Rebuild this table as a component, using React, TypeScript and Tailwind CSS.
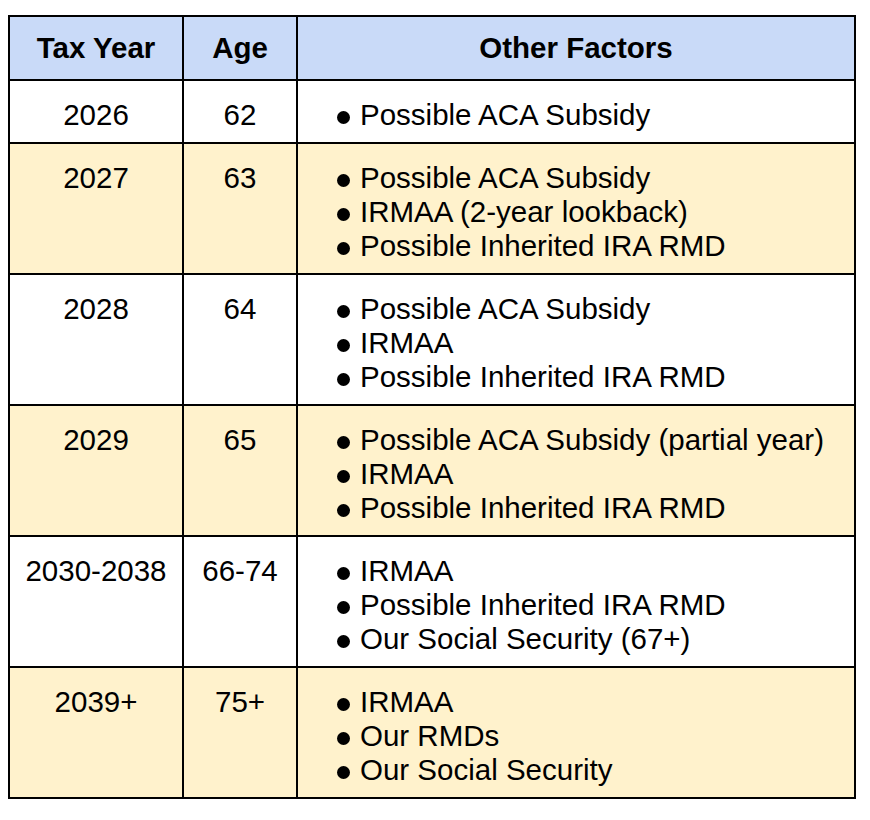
import React from "react";

type Row = { year: string; age: string; factors: string[]; shaded: boolean };

const rows: Row[] = [
  { year: "2026", age: "62", factors: ["Possible ACA Subsidy"], shaded: false },
  {
    year: "2027",
    age: "63",
    factors: ["Possible ACA Subsidy", "IRMAA (2-year lookback)", "Possible Inherited IRA RMD"],
    shaded: true,
  },
  {
    year: "2028",
    age: "64",
    factors: ["Possible ACA Subsidy", "IRMAA", "Possible Inherited IRA RMD"],
    shaded: false,
  },
  {
    year: "2029",
    age: "65",
    factors: ["Possible ACA Subsidy (partial year)", "IRMAA", "Possible Inherited IRA RMD"],
    shaded: true,
  },
  {
    year: "2030-2038",
    age: "66-74",
    factors: ["IRMAA", "Possible Inherited IRA RMD", "Our Social Security (67+)"],
    shaded: false,
  },
  {
    year: "2039+",
    age: "75+",
    factors: ["IRMAA", "Our RMDs", "Our Social Security"],
    shaded: true,
  },
];

const cell = "border-2 border-black align-top pt-[17px] pb-[10px]";
const head = "border-2 border-black align-top pt-[14px] pb-[14px] text-center font-bold";

export default function App() {
  return (
    <div
      className="bg-white w-[870px] h-[820px] pt-[15px] pl-[8px] text-black text-[29.5px] leading-[34px]"
      style={{ fontFamily: '"Liberation Sans", Arial, sans-serif' }}
    >
      <table className="table-fixed border-collapse w-[846px]">
        <colgroup>
          <col className="w-[174px]" />
          <col className="w-[114px]" />
          <col className="w-[558px]" />
        </colgroup>
        <thead>
          <tr className="bg-[#c9daf8]">
            <th className={head}>Tax Year</th>
            <th className={head}>Age</th>
            <th className={head}>Other Factors</th>
          </tr>
        </thead>
        <tbody>
          {rows.map((r) => (
            <tr key={r.year} className={r.shaded ? "bg-[#fff2cc]" : "bg-white"}>
              <td className={`${cell} text-center`}>{r.year}</td>
              <td className={`${cell} text-center`}>{r.age}</td>
              <td className={`${cell} pl-[39px]`}>
                {r.factors.map((f) => (
                  <div key={f} className="flex items-center whitespace-nowrap">
                    <span className="w-[13px] h-[13px] rounded-full bg-black shrink-0 mt-[5px]" />
                    <span className="ml-[10px]">{f}</span>
                  </div>
                ))}
              </td>
            </tr>
          ))}
        </tbody>
      </table>
    </div>
  );
}
